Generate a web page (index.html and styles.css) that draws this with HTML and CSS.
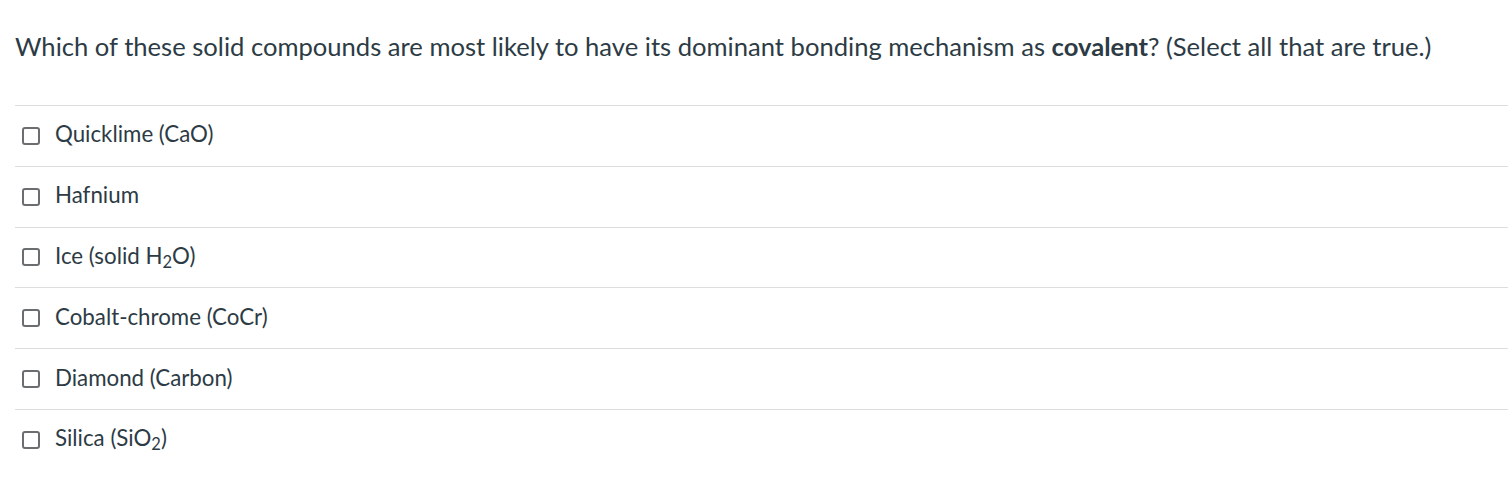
FILE: index.html
```html
<!DOCTYPE html>
<html>
<head>
<meta charset="utf-8">
<link rel="stylesheet" href="styles.css">
</head>
<body>
<div class="question">
  <p class="prompt">Which of these solid compounds are most likely to have its dominant bonding mechanism as <strong>covalent</strong>? (Select all that are true.)</p>
  <ul class="answers">
    <li class="answer"><span class="box"></span><span class="label">Quicklime (CaO)</span></li>
    <li class="answer"><span class="box"></span><span class="label">Hafnium</span></li>
    <li class="answer"><span class="box"></span><span class="label">Ice (solid H<sub>2</sub>O)</span></li>
    <li class="answer"><span class="box"></span><span class="label">Cobalt-chrome (CoCr)</span></li>
    <li class="answer"><span class="box"></span><span class="label">Diamond (Carbon)</span></li>
    <li class="answer"><span class="box"></span><span class="label">Silica (SiO<sub>2</sub>)</span></li>
  </ul>
</div>
</body>
</html>
```
FILE: styles.css
```css
html, body {
  margin: 0;
  padding: 0;
  background: #fff;
}
body {
  font-family: Lato, "Noto Sans", sans-serif;
  color: #2d3b45;
}
.question {
  padding: 0 0 0 15px;
}
.prompt {
  margin: 0;
  padding-top: 29px;
  font-size: 25.6px;
  line-height: 34px;
  height: 76px;
}
.prompt strong {
  font-weight: 700;
}
.answers {
  list-style: none;
  margin: 0;
  padding: 0;
}
.answer {
  display: flex;
  align-items: center;
  height: 59.8px;
  border-top: 1px solid #dddddd;
  font-size: 22.3px;
}
.box {
  box-sizing: border-box;
  width: 18px;
  height: 18px;
  border: 2px solid #6b6e70;
  border-radius: 3px;
  margin-left: 7px;
  margin-right: 15px;
  flex: none;
}
.label {
  line-height: 26px;
  margin-top: -3px;
}
sub {
  font-size: 16.5px;
  line-height: 0;
  vertical-align: -4px;
}
```
